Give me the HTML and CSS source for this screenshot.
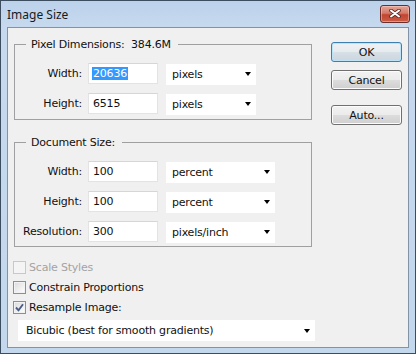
FILE: index.html
```html
<!DOCTYPE html>
<html>
<head>
<meta charset="utf-8">
<title>Image Size</title>
<link rel="stylesheet" href="styles.css">
</head>
<body>
<div class="window">
  <div class="titlebar">
    <span class="title">Image Size</span>
    <div class="close">
      <svg width="12" height="9" viewBox="0 0 12 9">
        <path d="M2 1.5 L10 7.5 M10 1.5 L2 7.5" stroke="#5b2a26" stroke-width="3.6" stroke-linecap="round" fill="none"/>
        <path d="M2 1.5 L10 7.5 M10 1.5 L2 7.5" stroke="#ffffff" stroke-width="2" stroke-linecap="round" fill="none"/>
      </svg>
    </div>
  </div>
  <div class="client">
    <div class="main">
      <fieldset class="group g1">
        <legend>Pixel Dimensions:&nbsp;&nbsp;384.6M</legend>
        <div class="rows">
          <span class="lbl">Width:</span>
          <div class="field"><span class="hl">20636</span></div>
          <div class="drop"><span>pixels</span><i class="arrow"></i></div>
          <span class="lbl">Height:</span>
          <div class="field">6515</div>
          <div class="drop"><span>pixels</span><i class="arrow"></i></div>
        </div>
      </fieldset>
      <fieldset class="group g2">
        <legend>Document Size:</legend>
        <div class="rows">
          <span class="lbl">Width:</span>
          <div class="field">100</div>
          <div class="drop"><span>percent</span><i class="arrow"></i></div>
          <span class="lbl">Height:</span>
          <div class="field">100</div>
          <div class="drop"><span>percent</span><i class="arrow"></i></div>
          <span class="lbl">Resolution:</span>
          <div class="field">300</div>
          <div class="drop"><span>pixels/inch</span><i class="arrow"></i></div>
        </div>
      </fieldset>
      <div class="checks">
        <div class="check disabled"><span class="box"></span>Scale Styles</div>
        <div class="check"><span class="box"></span>Constrain Proportions</div>
        <div class="check"><span class="box"><svg width="11" height="11" viewBox="0 0 11 11"><path d="M2 5.5 L4.5 8.3 L9 2.2" stroke="#4a5d88" stroke-width="1.9" fill="none"/></svg></span>Resample Image:</div>
      </div>
      <div class="drop resample"><span>Bicubic (best for smooth gradients)</span><i class="arrow"></i></div>
    </div>
    <div class="buttons">
      <div class="btn default">OK</div>
      <div class="btn">Cancel</div>
      <div class="btn auto">Auto...</div>
    </div>
  </div>
</div>
</body>
</html>
```
FILE: styles.css
```css
html, body {
  margin: 0;
  padding: 0;
}
body {
  width: 416px;
  height: 354px;
  font-family: "DejaVu Sans", sans-serif;
  font-size: 11px;
  letter-spacing: -0.2px;
  color: #111;
  background: #f0f0f0;
}
.window {
  box-sizing: border-box;
  width: 416px;
  height: 354px;
  border: 1px solid #3d4d60;
  background: linear-gradient(#bcd2eb, #c6d9ee 26px, #c3d7ed);
  padding: 0 6px 5px 6px;
  display: flex;
  flex-direction: column;
}
.titlebar {
  height: 26px;
  display: flex;
  align-items: center;
  justify-content: space-between;
}
.title {
  font-family: "Noto Sans", sans-serif;
  font-size: 12px;
  letter-spacing: 0;
  color: #1a1a1a;
}
.close {
  box-sizing: border-box;
  width: 30px;
  height: 18px;
  margin-top: -1px;
  margin-right: -1px;
  border: 1px solid #6a2f2a;
  border-radius: 3px;
  background: linear-gradient(#e6a597, #d47a6a 45%, #c2452f 55%, #cb5e48);
  box-shadow: inset 0 0 0 1px rgba(255, 220, 210, 0.45);
  display: flex;
  align-items: center;
  justify-content: center;
}
.client {
  flex: 1;
  border: 1px solid #8293a8;
  background: #f0f0f0;
  display: flex;
  align-items: flex-start;
}
.main {
  width: 302px;
  margin-left: 5px;
  padding-top: 10px;
  display: flex;
  flex-direction: column;
}
.group {
  box-sizing: border-box;
  width: 298px;
  margin: 0 0 0 1px;
  border: 1px solid #a0a0a0;
  padding: 12px 0 5px 0;
  min-width: 0;
}
.group legend {
  margin-left: 11px;
  padding: 0 7px 0 5px;
  line-height: 13px;
}
.g2 {
  margin-top: 16px;
  padding-bottom: 4px;
}
.rows {
  display: grid;
  grid-template-columns: 73px 70px 1fr;
  grid-auto-rows: 21px;
  row-gap: 9px;
  align-items: center;
}
.lbl {
  text-align: right;
  padding-right: 6px;
}
.field {
  box-sizing: border-box;
  height: 21px;
  background: #fff;
  border: 1px solid #e3e3e3;
  border-top-color: #d6d6d6;
  padding-left: 4px;
  display: flex;
  align-items: center;
}
.hl {
  background: #3399ff;
  color: #fff;
  line-height: 13px;
  padding: 0 1px;
  margin-left: -1px;
}
.drop {
  box-sizing: border-box;
  height: 21px;
  margin-left: 8px;
  margin-top: 1px;
  width: 90px;
  background: #fff;
  display: flex;
  align-items: center;
  justify-content: space-between;
  padding: 0 5px 0 6px;
}
.g2 .drop {
  width: 109px;
}
.arrow {
  width: 0;
  height: 0;
  border-left: 3.5px solid transparent;
  border-right: 3.5px solid transparent;
  border-top: 4px solid #000;
}
.checks {
  margin-top: 10px;
  display: flex;
  flex-direction: column;
}
.check {
  height: 20px;
  display: flex;
  align-items: center;
}
.box {
  box-sizing: border-box;
  width: 13px;
  height: 13px;
  margin-right: 3px;
  border: 1px solid #8e8f8f;
  background: linear-gradient(135deg, #dadada, #f4f4f4 70%, #fff);
  box-shadow: inset 0 0 0 1px #f2f2f2;
  display: flex;
  align-items: center;
  justify-content: center;
}
.check.disabled {
  color: #a3a3a3;
}
.check.disabled .box {
  border-color: #c8c8c8;
  background: #f4f4f4;
  box-shadow: none;
}
.resample {
  width: 297px;
  margin-left: 5px;
  margin-top: 3px;
  padding-left: 8px;
}
.buttons {
  width: 71px;
  margin-left: 16px;
  margin-top: 14px;
  display: flex;
  flex-direction: column;
  gap: 8px;
}
.btn {
  box-sizing: border-box;
  height: 20px;
  border: 1px solid #707070;
  border-radius: 3px;
  background: linear-gradient(#f2f2f2, #ebebeb 50%, #dddddd 50%, #cfcfcf);
  box-shadow: inset 0 0 0 1px #fcfcfc;
  display: flex;
  align-items: center;
  justify-content: center;
}
.btn.default {
  border-color: #3c7fb1;
  background: linear-gradient(#eef1f4, #e6ebef 50%, #d8dfe5 50%, #ccd6de);
  box-shadow: inset 0 0 0 1px #bfe3f6;
}
.btn.auto {
  margin-top: 7px;
}
```
